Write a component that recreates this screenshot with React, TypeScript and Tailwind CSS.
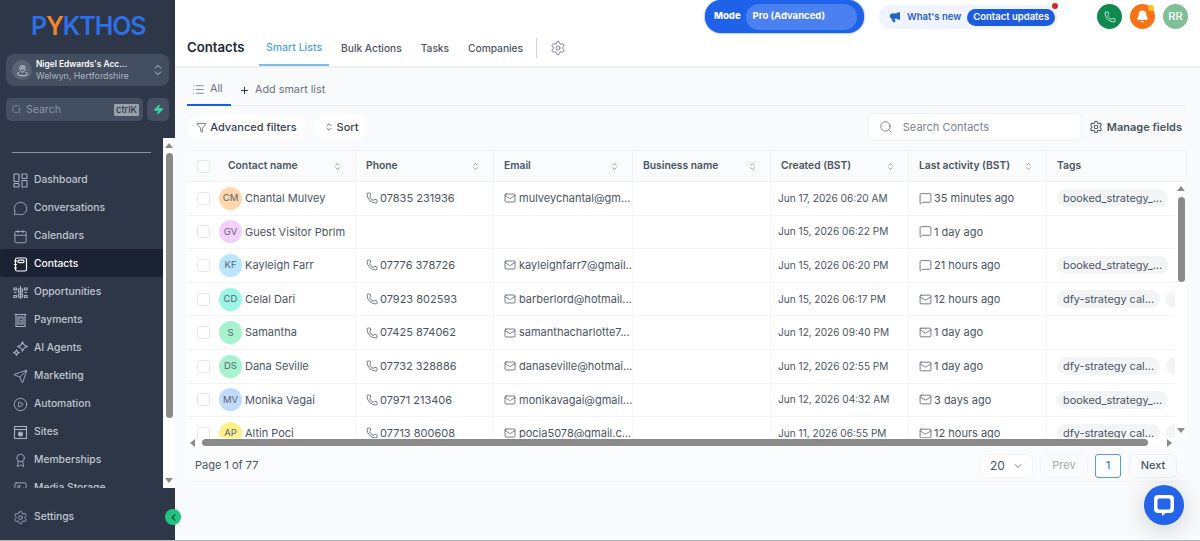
import React from 'react';
import {
  Award, Bell, CirclePlay, ChevronDown, ChevronLeft, ChevronsUpDown, Funnel, Image, List, Mail, Megaphone,
  MessageCircle, MessageSquare, Phone, Plus, Search, Send, Settings, Calendar, Zap,
} from 'lucide-react';

const font = { fontFamily: 'Inter, "Liberation Sans", sans-serif' };

const DashIcon = () => (
  <svg width="15" height="15" viewBox="0 0 15 15" fill="none" stroke="currentColor" strokeWidth="1.1">
    <rect x="1" y="1" width="5" height="7.5" rx="0.6" /><rect x="9" y="1" width="5" height="4.5" rx="0.6" />
    <rect x="1" y="10.5" width="5" height="3.5" rx="0.6" /><rect x="9" y="7.5" width="5" height="6.5" rx="0.6" />
  </svg>
);

const ContactsIcon = () => (
  <svg width="15" height="15" viewBox="0 0 15 15" fill="none" stroke="currentColor" strokeWidth="1.2">
    <rect x="2.5" y="1" width="11" height="13" rx="1.5" />
    <rect x="5" y="3.2" width="6" height="2.4" rx="1" />
    <path d="M1 4h3M1 7.5h3M1 11h3" />
  </svg>
);

const OppsIcon = () => (
  <svg width="15" height="15" viewBox="0 0 15 15" fill="none" stroke="currentColor" strokeWidth="1.2">
    <path d="M7.5 1v13M5.5 4h4v3h-4zM5.5 9h4v3h-4z" />
    <path d="M1 3h2.5v2H1zM1 7.5h2.5M1 10.5h2.5v2H1zM11.5 3H14v2h-2.5zM11.5 7.5H14M11.5 10.5H14v2h-2.5z" />
  </svg>
);

const PayIcon = () => (
  <svg width="15" height="15" viewBox="0 0 15 15" fill="none" stroke="currentColor" strokeWidth="1.1">
    <path d="M1.5 1.5h12M3 1.5v12h9v-12" />
    <rect x="5" y="4" width="5" height="7" />
    <path d="M8.6 5.7H6.9a.8.8 0 0 0 0 1.8h1.2a.8.8 0 0 1 0 1.8H6.3" strokeWidth="0.8" />
  </svg>
);

const AgentIcon = () => (
  <svg width="15" height="15" viewBox="0 0 15 15" fill="none" stroke="currentColor" strokeWidth="1.1">
    <path d="M9.5 1l1.6 3 3 1.5-3 1.6-1.6 3-1.6-3-3-1.6 3-1.5zM3.5 9l.9 1.7 1.7.8-1.7.9-.9 1.7-.9-1.7-1.7-.9 1.7-.8z" />
  </svg>
);

const SitesIcon = () => (
  <svg width="15" height="15" viewBox="0 0 15 15" fill="none" stroke="currentColor" strokeWidth="1.1">
    <rect x="1.5" y="1.5" width="12" height="12" />
    <path d="M1.5 4.5h12" />
    <circle cx="7.5" cy="9" r="2" fill="currentColor" />
  </svg>
);

const AccountIcon = () => (
  <svg width="13" height="13" viewBox="0 0 13 13" fill="none" stroke="currentColor" strokeWidth="0.9">
    <path d="M6.5 8.5C5 7 3.8 5.8 3.8 4.2a2.7 2.7 0 0 1 5.4 0c0 1.6-1.2 2.8-2.7 4.3z" />
    <circle cx="6.5" cy="4.2" r="1" />
    <path d="M3.5 8.2C2.2 8.6 1.5 9.2 1.5 10c0 1 2.2 1.8 5 1.8s5-.8 5-1.8c0-.8-.7-1.4-2-1.8" />
  </svg>
);

const navItems: [string, React.ReactNode][] = [
  ['Dashboard', <DashIcon />],
  ['Conversations', <MessageCircle size={15} strokeWidth={1.4} />],
  ['Calendars', <Calendar size={15} strokeWidth={1.4} />],
  ['Contacts', <ContactsIcon />],
  ['Opportunities', <OppsIcon />],
  ['Payments', <PayIcon />],
  ['AI Agents', <AgentIcon />],
  ['Marketing', <Send size={15} strokeWidth={1.4} />],
  ['Automation', <CirclePlay size={15} strokeWidth={1.4} />],
  ['Sites', <SitesIcon />],
  ['Memberships', <Award size={15} strokeWidth={1.4} />],
  ['Media Storage', <Image size={15} strokeWidth={1.4} />],
];

type Row = {
  name: string; initials: string; avatar: string; phone?: string; email?: string;
  created: string; via: 'chat' | 'mail'; activity: string; tag?: 'booked' | 'dfy';
};

const rows: Row[] = [
  { name: 'Chantal Mulvey', initials: 'CM', avatar: 'bg-[#fed7aa]', phone: '07835 231936', email: 'mulveychantal@gm...', created: 'Jun 17, 2026 06:20 AM', via: 'chat', activity: '35 minutes ago', tag: 'booked' },
  { name: 'Guest Visitor Pbrlm', initials: 'GV', avatar: 'bg-[#f5d0fe]', created: 'Jun 15, 2026 06:22 PM', via: 'chat', activity: '1 day ago' },
  { name: 'Kayleigh Farr', initials: 'KF', avatar: 'bg-[#bae6fd]', phone: '07776 378726', email: 'kayleighfarr7@gmail...', created: 'Jun 15, 2026 06:20 PM', via: 'chat', activity: '21 hours ago', tag: 'booked' },
  { name: 'Celal Dari', initials: 'CD', avatar: 'bg-[#99f6e4]', phone: '07923 802593', email: 'barberlord@hotmail....', created: 'Jun 15, 2026 06:17 PM', via: 'mail', activity: '12 hours ago', tag: 'dfy' },
  { name: 'Samantha', initials: 'S', avatar: 'bg-[#a7f3d0]', phone: '07425 874062', email: 'samanthacharlotte7...', created: 'Jun 12, 2026 09:40 PM', via: 'mail', activity: '1 day ago' },
  { name: 'Dana Seville', initials: 'DS', avatar: 'bg-[#a7f3d0]', phone: '07732 328886', email: 'danaseville@hotmai...', created: 'Jun 12, 2026 02:55 PM', via: 'mail', activity: '1 day ago', tag: 'dfy' },
  { name: 'Monika Vagai', initials: 'MV', avatar: 'bg-[#bfdbfe]', phone: '07971 213406', email: 'monikavagai@gmail....', created: 'Jun 12, 2026 04:32 AM', via: 'mail', activity: '3 days ago', tag: 'booked' },
  { name: 'Altin Poci', initials: 'AP', avatar: 'bg-[#fef08a]', phone: '07713 800608', email: 'pocia5078@gmail.c...', created: 'Jun 11, 2026 06:55 PM', via: 'mail', activity: '12 hours ago', tag: 'dfy' },
];

const gridCols = 'grid grid-cols-[169px_138px_139px_138px_138px_138px_140px]';

function Sidebar() {
  return (
    <aside className="w-[175px] shrink-0 h-full bg-[#2d3748] flex flex-col">
      <div className="h-[54px] flex items-start pt-[12px] pl-[31px] text-[25px] leading-[28px] font-semibold tracking-[-1.1px] text-[#2f6fe4]">
        P<span className="text-[#f0862c]">Y</span>KTHOS
      </div>
      <div className="mx-[6px] h-[32px] rounded-lg bg-[#434e60] flex items-center pl-[6px] pr-[4px]">
        <div className="w-[20px] h-[20px] rounded-full bg-[#5a6475] flex items-center justify-center text-[#d5d8de]">
          <AccountIcon />
        </div>
        <div className="ml-[4px] flex-1 min-w-0">
          <div className="text-[8.4px] leading-[12px] font-semibold text-white whitespace-nowrap">Nigel Edwards's Acc...</div>
          <div className="text-[8.8px] leading-[12px] text-[#aeb4bf] whitespace-nowrap">Welwyn, Hertfordshire</div>
        </div>
        <ChevronsUpDown size={14} strokeWidth={1.4} className="text-[#d5d8de]" />
      </div>
      <div className="mx-[6px] mt-[12px] flex gap-[4px] h-[23px]">
        <div className="flex-1 rounded-[5px] bg-[#444f61] flex items-center pl-[5px] pr-[4px] text-[#8e95a1]">
          <Search size={11} strokeWidth={1.6} />
          <span className="ml-[4px] text-[10.5px]">Search</span>
          <span className="ml-auto bg-[#98a0ac] text-[#1f2937] text-[9.5px] leading-[12px] px-[2px] rounded-[1px]">ctrlK</span>
        </div>
        <div className="w-[22px] rounded-[5px] bg-[#444f61] flex items-center justify-center">
          <Zap size={11} className="text-[#34d399] fill-[#34d399]" />
        </div>
      </div>
      <div className="mt-[17px] flex h-[350px]">
        <nav className="w-[163px] overflow-hidden">
          <div className="mx-[12px] mt-[14px] h-px bg-[#8a93a3]" />
          <div className="mt-[12px]">
            {navItems.map(([label, icon]) => {
              const active = label === 'Contacts';
              return (
                <div
                  key={label}
                  className={`h-[28px] flex items-center pl-[13px] pt-[2px] gap-[6px] text-[10.3px] font-medium rounded-[3px] ${active ? 'bg-[#1a2233] text-white' : 'text-[#c0c6d0]'}`}
                >
                  <span className={`w-[15px] flex justify-center ${active ? 'text-white' : 'text-[#aab1bd]'}`}>{icon}</span>
                  {label}
                </div>
              );
            })}
          </div>
        </nav>
        <div className="w-[12px] bg-white flex flex-col items-center py-[5px]">
          <div className="w-0 h-0 border-x-[4px] border-x-transparent border-b-[5px] border-b-[#8a8a8a]" />
          <div className="w-[7px] h-[265px] mt-[5px] rounded-full bg-[#8a8a8a]" />
          <div className="mt-auto w-0 h-0 border-x-[4px] border-x-transparent border-t-[5px] border-t-[#8a8a8a]" />
        </div>
      </div>
      <div className="mt-[14px] h-[28px] flex items-center pl-[13px] pt-[2px] gap-[6px] text-[10.3px] font-medium text-[#c0c6d0]">
        <Settings size={15} strokeWidth={1.4} className="text-[#aab1bd]" />
        Settings
      </div>
    </aside>
  );
}

function TopBar() {
  return (
    <header className="h-[68px] bg-white border-b-2 border-[#eceef1] flex flex-col shrink-0">
      <div className="h-[33px] flex items-start justify-end">
        <div className="w-[159px] h-[33px] rounded-[16px] bg-[#1f62ea] flex items-center pl-[9px] pr-[7px] gap-[5px] shadow-[0_0_2px_#1f62ea]">
          <span className="text-[9.5px] font-extrabold text-white">Mode</span>
          <span className="flex-1 h-[26px] rounded-[13px] bg-[#4b80f0] flex items-center pl-[7px] text-[9.5px] font-bold text-white">Pro (Advanced)</span>
        </div>
        <div className="relative ml-[15px] mt-[5px] w-[179px] h-[24px] rounded-[12px] bg-[#eff4fe] flex items-center pl-[10px]">
          <Megaphone size={12} className="text-[#2563c9] fill-[#2563c9]" />
          <span className="ml-[6px] text-[9.5px] font-semibold text-[#2b5fc7]">What's new</span>
          <span className="ml-[6px] h-[17px] rounded-[9px] bg-[#1d5ce0] px-[6px] flex items-center text-[9.5px] font-semibold text-white whitespace-nowrap">Contact updates</span>
          <span className="absolute left-[173px] top-[-2px] w-[6px] h-[6px] rounded-full bg-[#dc2626]" />
        </div>
        <div className="ml-[39px] mt-[4px] flex gap-[8px] mr-[12px]">
          <div className="w-[25px] h-[25px] rounded-full bg-[#0f8a4f] flex items-center justify-center text-white">
            <Phone size={12} strokeWidth={1.5} />
          </div>
          <div className="relative w-[25px] h-[25px] rounded-full bg-[#f97316] flex items-center justify-center text-white">
            <Bell size={13} className="fill-white" />
            <span className="absolute right-[1px] top-[1px] w-[6px] h-[6px] rounded-full bg-[#fbbf24]" />
          </div>
          <div className="w-[25px] h-[25px] rounded-full bg-[#7fbf95] flex items-center justify-center text-[11px] font-medium text-white">RR</div>
        </div>
      </div>
      <div className="flex-1 flex items-center pl-[12px]">
        <h1 className="w-[57px] text-[13.2px] font-semibold text-[#1f2937] -mt-[3px] whitespace-nowrap">Contacts</h1>
        <nav className="ml-[15px] flex items-center font-medium text-[#4b5563] h-full">
          <span className="h-full px-[7px] flex items-center pb-[1px] text-[10.5px] text-[#4ea5d9] border-b-2 border-[#7fbde0]">Smart Lists</span>
          <span className="ml-[12px] pb-[1px] text-[10.2px]">Bulk Actions</span>
          <span className="ml-[19px] pb-[1px] text-[10.2px]">Tasks</span>
          <span className="ml-[19px] pb-[1px] text-[10.2px]">Companies</span>
        </nav>
        <div className="ml-[13px] w-px h-[20px] bg-[#d1d5db] -mt-[3px]" />
        <Settings size={16} strokeWidth={1.3} className="ml-[13px] text-[#6b7280] -mt-[3px]" />
      </div>
    </header>
  );
}

function Toolbar() {
  return (
    <>
      <div className="h-[38px] border-b border-[#eceef1] flex items-stretch text-[10.8px] text-[#6b7280]">
        <div className="w-[44px] flex items-center gap-[5px] pl-[5px] pt-[6px] border-b-2 border-[#1d5ce0] -mb-px">
          <List size={13} strokeWidth={1.5} />
          All
        </div>
        <div className="ml-[8px] flex items-center gap-[5px] pt-[7px]">
          <Plus size={11} strokeWidth={2} className="text-[#1f2937]" />
          Add smart list
        </div>
      </div>
      <div className="h-[44px] pb-[2px] flex items-center text-[#374151] text-[11px] font-medium">
        <div className="h-[24px] w-[119px] rounded-full bg-white flex items-center justify-center gap-[3px]">
          <Funnel size={11} strokeWidth={1.5} />
          Advanced filters
        </div>
        <div className="ml-[8px] h-[24px] w-[54px] rounded-full bg-white flex items-center justify-center gap-[3px]">
          <ChevronsUpDown size={10} strokeWidth={1.8} />
          Sort
        </div>
        <div className="ml-auto h-[28px] w-[214px] rounded-md bg-white border border-[#f0f1f3] flex items-center pl-[10px] text-[#6b7280] font-normal">
          <Search size={14} strokeWidth={1.4} />
          <span className="ml-[10px] text-[#7b8390]">Search Contacts</span>
        </div>
        <div className="ml-[7px] mr-[5px] flex items-center gap-[4px] font-semibold text-[#4b5563]">
          <Settings size={14} strokeWidth={1.8} />
          Manage fields
        </div>
      </div>
    </>
  );
}

function HeaderCell({ label, sort = true }: { label: string; sort?: boolean }) {
  return (
    <div className="flex items-center pl-[10px] pr-[13px] border-r border-[#f1f2f4] text-[10.3px] font-semibold text-[#4b5563]">
      {label}
      {sort && <ChevronsUpDown size={9} strokeWidth={1.6} className="ml-auto text-[#6b7280]" />}
    </div>
  );
}

function TagPill({ tag }: { tag: 'booked' | 'dfy' }) {
  if (tag === 'booked') {
    return <span className="h-[18px] px-[6px] rounded-full bg-[#f3f4f6] flex items-center text-[10.9px] text-[#4b5563] whitespace-nowrap">booked_strategy_...</span>;
  }
  return (
    <>
      <span className="h-[18px] px-[6px] rounded-full bg-[#f3f4f6] flex items-center text-[10.9px] text-[#4b5563] whitespace-nowrap">dfy-strategy cal...</span>
      <span className="h-[18px] w-[20px] ml-[6px] rounded-l-full bg-[#f3f4f6] shrink-0" />
    </>
  );
}

function ContactRow({ row }: { row: Row }) {
  const cell = 'flex items-center border-r border-[#f5f6f7] text-[#4b5563] whitespace-nowrap overflow-hidden';
  return (
    <div className={`${gridCols} h-[33.6px] bg-white border-b border-[#f3f4f6]`}>
      <div className={`${cell} text-[11px] pl-[10px] gap-[3px]`}>
        <span className="w-[13px] h-[13px] rounded-[3px] border border-[#e5e7eb] bg-white shrink-0" />
        <span className={`ml-[6px] w-[23px] h-[23px] rounded-full ${row.avatar} flex items-center justify-center text-[9.5px] text-[#5b6472] shrink-0`}>{row.initials}</span>
        <span>{row.name}</span>
      </div>
      <div className={`${cell} text-[11px] px-[10px] gap-[2px]`}>
        {row.phone && <><Phone size={12} strokeWidth={1.5} />{row.phone}</>}
      </div>
      <div className={`${cell} text-[11px] px-[10px] gap-[3px]`}>
        {row.email && <><Mail size={12} strokeWidth={1.5} className="shrink-0" />{row.email}</>}
      </div>
      <div className={cell} />
      <div className={`${cell} text-[10.1px] pl-[7px]`}>{row.created}</div>
      <div className={`${cell} text-[11px] px-[10px] gap-[2px]`}>
        {row.via === 'chat' ? <MessageSquare size={13} strokeWidth={1.4} /> : <Mail size={13} strokeWidth={1.4} />}
        {row.activity}
      </div>
      <div className="flex items-center pl-[10px] overflow-hidden">
        {row.tag && <TagPill tag={row.tag} />}
      </div>
    </div>
  );
}

function ContactsTable() {
  return (
    <div className="relative">
      <div className={`${gridCols} h-[32px] bg-[#fafbfc] border-y border-[#f1f2f4]`}>
        <div className="flex items-center pl-[10px] pr-[13px] border-r border-[#f1f2f4] text-[10.3px] font-semibold text-[#4b5563]">
          <span className="w-[13px] h-[13px] rounded-[3px] border border-[#e5e7eb] bg-white mr-[18px]" />
          Contact name
          <ChevronsUpDown size={9} strokeWidth={1.6} className="ml-auto text-[#6b7280]" />
        </div>
        <HeaderCell label="Phone" />
        <HeaderCell label="Email" />
        <HeaderCell label="Business name" />
        <HeaderCell label="Created (BST)" />
        <HeaderCell label="Last activity (BST)" />
        <HeaderCell label="Tags" sort={false} />
      </div>
      <div className="h-[256px] overflow-hidden">
        {rows.map(row => <ContactRow key={row.name} row={row} />)}
      </div>
      {/* scrollbars, drawn over the rows */}
      <div className="absolute right-0 top-[32px] bottom-0 w-[12px] bg-white flex flex-col items-center pt-[4px] pb-[5px]">
        <div className="w-0 h-0 border-x-[4px] border-x-transparent border-b-[5px] border-b-[#8a8a8a]" />
        <div className="w-[7px] h-[85px] mt-[6px] rounded-full bg-[#8a8a8a]" />
        <div className="mt-auto w-0 h-0 border-x-[4px] border-x-transparent border-t-[5px] border-t-[#8a8a8a]" />
      </div>
      <div className="absolute left-0 right-[12px] bottom-[-9px] h-[9px] bg-white flex items-center pl-[3px] pr-[3px]">
        <div className="w-0 h-0 border-y-[4px] border-y-transparent border-r-[5px] border-r-[#8a8a8a]" />
        <div className="ml-[7px] flex-1 h-[7px] rounded-full bg-[#8a8a8a]" />
        <div className="ml-[19px] w-0 h-0 border-y-[4px] border-y-transparent border-l-[5px] border-l-[#8a8a8a]" />
      </div>
    </div>
  );
}

function Pager() {
  return (
    <div className="mt-[10px] h-[34px] bg-[#fafbfc] border-b border-[#f1f2f4] flex items-center pt-[2px] pl-[8px] pr-[10px] text-[11px] text-[#4b5563]">
      <span>Page 1 of 77</span>
      <div className="ml-auto w-[53px] h-[24px] rounded-md bg-white border border-[#f3f4f6] flex items-center pl-[9px] gap-[7px] text-[12px]">
        20
        <ChevronDown size={12} strokeWidth={1.5} />
      </div>
      <div className="ml-[7px] w-[48px] h-[24px] rounded-md border border-[#f3f4f6] flex items-center justify-center text-[#a5abb5]">Prev</div>
      <div className="ml-[7px] w-[26px] h-[24px] rounded-[3px] bg-white border border-[#5a9bdc] flex items-center justify-center text-[#3b7fc4] font-medium">1</div>
      <div className="ml-[8px] w-[48px] h-[24px] rounded-md border border-[#eceef1] flex items-center justify-center font-medium">Next</div>
    </div>
  );
}

export default function App() {
  return (
    <div style={font} className="relative w-[1200px] h-[541px] overflow-hidden flex border-b border-[#b5b5b5] bg-white">
      <Sidebar />
      <main className="flex-1 min-w-0 flex flex-col bg-[#f9fafb]">
        <TopBar />
        <div className="pl-[12px] pr-[13px]">
          <Toolbar />
          <ContactsTable />
          <Pager />
        </div>
      </main>
      <button className="absolute left-[165px] top-[509px] w-[16px] h-[16px] rounded-full bg-[#22c27f] flex items-center justify-center text-[#14532d]">
        <ChevronLeft size={11} strokeWidth={2.5} />
      </button>
      <div className="absolute left-[1144px] top-[485px] w-[40px] h-[40px] rounded-full bg-[#2364e8] flex items-center justify-center shadow-[0_4px_24px_rgba(0,0,0,0.18)]">
        <svg width="24" height="24" viewBox="0 0 24 24">
          <path d="M6 2h12a4 4 0 0 1 4 4v10a4 4 0 0 1-4 4h-4l-4 3v-3H6a4 4 0 0 1-4-4V6a4 4 0 0 1 4-4z" fill="#fff" />
          <rect x="5.5" y="5.5" width="13" height="11" rx="2" fill="#2364e8" />
        </svg>
      </div>
    </div>
  );
}
